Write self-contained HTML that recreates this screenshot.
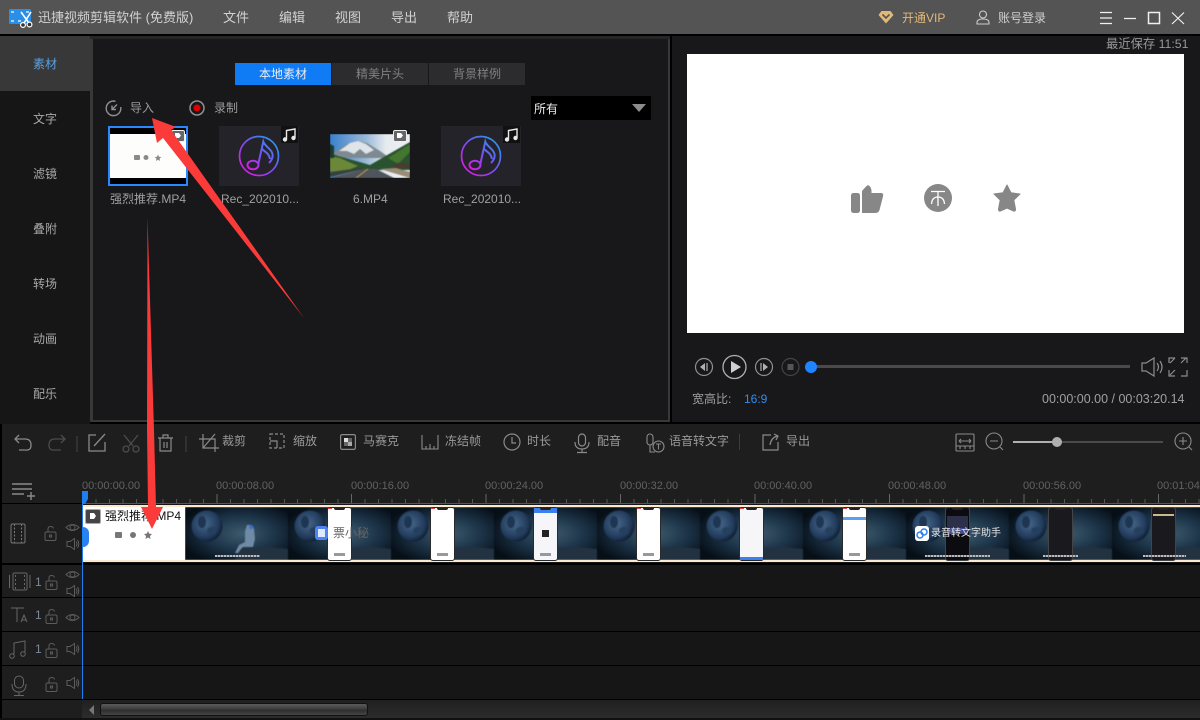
<!DOCTYPE html>
<html><head><meta charset="utf-8">
<style>
*{margin:0;padding:0;box-sizing:border-box}
html,body{width:1200px;height:720px;overflow:hidden;background:#000}
body{position:relative;font-family:"Liberation Sans","Noto Sans CJK SC",sans-serif;font-size:12px;color:#b4b4b4}
.a{position:absolute}
.t{position:absolute;white-space:nowrap;line-height:16px}
svg{position:absolute;overflow:visible}
.side{position:absolute;left:0;width:90px;text-align:center;line-height:16px;color:#a8a8a8}
.rt{position:absolute;top:479px;color:#626262;font-size:11px;line-height:14px;white-space:nowrap}
.ph{position:absolute;top:507px;width:25px;height:54px;border:1px solid #2a2a2a;border-radius:3px;background:#fff}
.ph i{position:absolute;left:6px;top:0;width:11px;height:2px;background:#222;border-radius:0 0 2px 2px}
.ph b{position:absolute;left:0;top:0;width:4px;height:1px;background:#e04040}
.ph u{position:absolute;left:6px;bottom:4px;width:11px;height:3px;background:#999}
.ph.k{background:#1a1a1e;border-color:#444}
.cap{position:absolute;top:555px;height:2px;background:repeating-linear-gradient(90deg,#bbb 0,#bbb 2px,#667 2px,#667 3px)}
</style></head><body>

<!-- title bar -->
<div class="a" style="left:0;top:0;width:1200px;height:34px;background:#545454"></div>
<svg style="left:9px;top:9px" width="24" height="20" viewBox="0 0 24 20">
<rect x="0" y="0" width="22" height="15" rx="1.500" fill="#2a8fe8"/>
<rect x="2" y="2" width="3" height="2" fill="#a9d6ff"/><rect x="17" y="2" width="3" height="2" fill="#a9d6ff"/>
<rect x="2" y="11" width="3" height="2" fill="#a9d6ff"/><rect x="9" y="11" width="3" height="2" fill="#a9d6ff"/>
<path d="M12 3L20 14M22 3L15 14" stroke="#fff" stroke-width="1.600" fill="none"/>
<circle cx="14" cy="16" r="2.400" fill="#333" stroke="#fff" stroke-width="1.200"/><circle cx="20.500" cy="15.500" r="2.400" fill="#333" stroke="#fff" stroke-width="1.200"/>
</svg>
<div class="t" style="left:38px;top:10px;font-size:13px;color:#d2d2d2">迅捷视频剪辑软件 (免费版)</div>
<div class="t" style="left:223px;top:10px;font-size:13px;color:#d2d2d2">文件</div>
<div class="t" style="left:279px;top:10px;font-size:13px;color:#d2d2d2">编辑</div>
<div class="t" style="left:335px;top:10px;font-size:13px;color:#d2d2d2">视图</div>
<div class="t" style="left:391px;top:10px;font-size:13px;color:#d2d2d2">导出</div>
<div class="t" style="left:447px;top:10px;font-size:13px;color:#d2d2d2">帮助</div>
<svg style="left:878px;top:10px" width="16" height="14" viewBox="0 0 16 14"><path d="M3.500 1H12.500L15.500 5L8 13.500L.5 5Z" fill="#e0b878"/><path d="M4.500 4.500L8 8L11.500 4.500" stroke="#545454" stroke-width="1.600" fill="none"/></svg>
<div class="t" style="left:902px;top:10px;color:#e0b878">开通VIP</div>
<svg style="left:976px;top:10px" width="14" height="15" viewBox="0 0 14 15"><circle cx="7" cy="4.500" r="3.500" fill="none" stroke="#ccc" stroke-width="1.100"/><path d="M1 14V12.500C1 10 3 9 7 9S13 10 13 12.500V14Z" fill="none" stroke="#ccc" stroke-width="1.100"/></svg>
<div class="t" style="left:998px;top:10px;color:#cfcfcf">账号登录</div>
<svg style="left:1099px;top:11px" width="90" height="14" viewBox="0 0 90 14" fill="none" stroke="#f0f0f0" stroke-width="1.200">
<path d="M1 1.500H13M1 7H13M1 12.500H13M25 7.500H37"/><rect x="49.500" y="1.500" width="11" height="11" stroke-width="1.500"/><path d="M73 1.500L85 13M85 1.500L73 13"/></svg>

<!-- left sidebar -->
<div class="a" style="left:0;top:36px;width:90px;height:388px;background:#161616"></div>
<div class="a" style="left:0;top:36px;width:90px;height:55px;background:#383838"></div>
<div class="side" style="top:56px;color:#5aa0e0">素材</div>
<div class="side" style="top:111px">文字</div>
<div class="side" style="top:166px">滤镜</div>
<div class="side" style="top:221px">叠附</div>
<div class="side" style="top:276px">转场</div>
<div class="side" style="top:331px">动画</div>
<div class="side" style="top:386px">配乐</div>

<!-- media panel -->
<div class="a" style="left:90px;top:36px;width:580px;height:386px;background:#383838"></div>
<div class="a" style="left:90px;top:36px;width:580px;height:3px;background:#262626"></div>
<div class="a" style="left:93px;top:39px;width:575px;height:381px;background:#18181a"></div>
<div class="a" style="left:235px;top:63px;width:96px;height:22px;background:#0f7bf5;color:#eee;text-align:center;line-height:22px">本地素材</div>
<div class="a" style="left:332px;top:63px;width:96px;height:22px;background:#2c2c2e;color:#808080;text-align:center;line-height:22px">精美片头</div>
<div class="a" style="left:429px;top:63px;width:96px;height:22px;background:#2c2c2e;color:#808080;text-align:center;line-height:22px">背景样例</div>
<svg style="left:105px;top:100px" width="17" height="17" viewBox="0 0 17 17" fill="none" stroke="#909090" stroke-width="1.400"><path d="M10.500 1.300A7.300 7.300 0 1 0 15.700 7"/><path d="M12 4.500L7.500 9M7 5.500V9.500H11"/></svg>
<div class="t" style="left:130px;top:100px;color:#9a9a9a">导入</div>
<svg style="left:189px;top:100px" width="16" height="16" viewBox="0 0 16 16"><circle cx="8" cy="8" r="7" fill="none" stroke="#909090" stroke-width="1.500"/><circle cx="8" cy="8" r="3.500" fill="#e00000"/></svg>
<div class="t" style="left:214px;top:100px;color:#9a9a9a">录制</div>
<div class="a" style="left:531px;top:96px;width:120px;height:24px;background:#000;color:#eee;line-height:27px;padding-left:3px">所有</div>
<svg style="left:632px;top:104px" width="14" height="8" viewBox="0 0 14 8"><path d="M0 0H14L7 8Z" fill="#8c8c8c"/></svg>

<!-- thumb 1 -->
<div class="a" style="left:108px;top:126px;width:80px;height:60px;background:#000;border:2px solid #2888ff"></div>
<div class="a" style="left:110px;top:134px;width:76px;height:44px;background:#fdfdfb"></div>
<svg style="left:134px;top:154px" width="30" height="8" viewBox="0 0 30 8" fill="#8a8a8a"><rect x="0" y="1" width="6" height="5" rx="1"/><circle cx="12" cy="3.500" r="2.500"/><path d="M24 0.500L25 2.700L27.300 3L25.600 4.600L26 7L24 5.800L22 7L22.400 4.600L20.700 3L23 2.700Z"/></svg>
<div class="a" style="left:171px;top:130px;width:14px;height:12px;background:#666;border:1px solid #eee;border-radius:2px"></div>
<svg style="left:174px;top:132px" width="8" height="8"><path d="M1 1H5L7 3.500L5 6H1Z" fill="#fff"/></svg>
<div class="t" style="left:110px;top:191px;color:#a0a0a0">强烈推荐.MP4</div>

<!-- thumb 2 -->
<div class="a" style="left:219px;top:126px;width:80px;height:60px;background:#232329"></div>
<svg style="left:219px;top:126px" width="80" height="60" viewBox="0 0 80 60">
<defs><linearGradient id="g" x1="1" y1="0" x2="0" y2="1"><stop offset="0" stop-color="#10a8f0"/><stop offset=".5" stop-color="#7a50f0"/><stop offset="1" stop-color="#f010e0"/></linearGradient>
<linearGradient id="gn" gradientUnits="userSpaceOnUse" x1="54" y1="14" x2="28" y2="46"><stop offset="0" stop-color="#2a90f0"/><stop offset=".5" stop-color="#7a50f0"/><stop offset="1" stop-color="#f010e0"/></linearGradient></defs>
<circle cx="40" cy="30" r="19.500" fill="none" stroke="url(#g)" stroke-width="1.700"/>
<path d="M39.300 38L44.300 15.700C46 21 55 24 53.500 31Q53 34 50 37M43 23C46 26 50 27 51 33" fill="none" stroke="url(#gn)" stroke-width="2"/>
<ellipse cx="34" cy="39" rx="5.500" ry="4.300" fill="none" stroke="url(#gn)" stroke-width="2"/>
</svg>
<div class="a" style="left:281px;top:126px;width:17px;height:17px;background:#111"></div>
<svg style="left:282px;top:128px" width="15" height="15" viewBox="0 0 15 15"><path d="M4.500 11V2.500L13 1V9.500" fill="none" stroke="#e8e8e8" stroke-width="1.400"/><circle cx="3" cy="11.500" r="2.200" fill="#e8e8e8"/><circle cx="11.500" cy="10" r="2.200" fill="#e8e8e8"/></svg>
<div class="t" style="left:221px;top:191px;color:#a0a0a0">Rec_202010...</div>

<!-- thumb 3 -->
<div class="a" style="left:330px;top:134px;width:80px;height:44px;overflow:hidden">
<svg style="left:0;top:0;filter:blur(.6px)" width="80" height="44" viewBox="0 0 80 44">
<defs><linearGradient id="sky" x1="0" y1="0" x2="1" y2="0"><stop offset="0" stop-color="#3a80cc"/><stop offset=".45" stop-color="#9ab8d8"/><stop offset=".7" stop-color="#e6ebef"/><stop offset="1" stop-color="#eef1f2"/></linearGradient></defs>
<rect width="80" height="44" fill="url(#sky)"/>
<path d="M3 19L15 11L27 7L37 9L50 17L60 24H3Z" fill="#7e8a92"/>
<path d="M9 17L20 9L28 7L36 10L44 16L36 20L30 15L24 20L17 17Z" fill="#dfe4e8"/>
<path d="M0 19L8 22L26 27L40 31L52 24L80 8V36H0Z" fill="#2b5230"/>
<path d="M0 22L10 24L28 32L16 37H0Z" fill="#6a8838"/>
<path d="M0 10L4 12V24H0Z" fill="#1e3a2c"/>
<path d="M58 24L80 10V18L68 30Z" fill="#43762f"/>
<path d="M0 44L34 35H46L64 44Z" fill="#50545c"/>
<path d="M0 38L30 34L34 35L0 43Z" fill="#39423a"/>
<path d="M26 44L38 35" stroke="#c8a440" stroke-width="1"/>
<path d="M50 35L80 44V38L66 34Z" fill="#9a8c78"/>
<rect x="64" y="29" width="16" height="5" fill="#4a3c30"/>
</svg></div>
<div class="a" style="left:393px;top:130px;width:14px;height:12px;background:#666;border:1px solid #eee;border-radius:2px"></div>
<svg style="left:396px;top:132px" width="8" height="8"><path d="M1 1H5L7 3.500L5 6H1Z" fill="#fff"/></svg>
<div class="t" style="left:353px;top:191px;color:#a0a0a0">6.MP4</div>

<!-- thumb 4 -->
<div class="a" style="left:441px;top:126px;width:80px;height:60px;background:#232329"></div>
<svg style="left:441px;top:126px" width="80" height="60" viewBox="0 0 80 60">
<circle cx="40" cy="30" r="19.500" fill="none" stroke="url(#g)" stroke-width="1.700"/>
<path d="M39.300 38L44.300 15.700C46 21 55 24 53.500 31Q53 34 50 37M43 23C46 26 50 27 51 33" fill="none" stroke="url(#gn)" stroke-width="2"/>
<ellipse cx="34" cy="39" rx="5.500" ry="4.300" fill="none" stroke="url(#gn)" stroke-width="2"/>
</svg>
<div class="a" style="left:503px;top:126px;width:17px;height:17px;background:#111"></div>
<svg style="left:504px;top:128px" width="15" height="15" viewBox="0 0 15 15"><path d="M4.500 11V2.500L13 1V9.500" fill="none" stroke="#e8e8e8" stroke-width="1.400"/><circle cx="3" cy="11.500" r="2.200" fill="#e8e8e8"/><circle cx="11.500" cy="10" r="2.200" fill="#e8e8e8"/></svg>
<div class="t" style="left:443px;top:191px;color:#a0a0a0">Rec_202010...</div>

<!-- preview -->
<div class="a" style="left:672px;top:36px;width:528px;height:386px;background:#18181a"></div>
<div class="t" style="left:1106px;top:36px;color:#989898;font-size:12.300px">最近保存 11:51</div>
<div class="a" style="left:687px;top:54px;width:497px;height:279px;background:#fff"></div>
<svg style="left:850px;top:183px" width="170" height="32" viewBox="0 0 170 32" fill="#878787">
<rect x="1" y="10" width="9" height="20" rx="2.500"/>
<path d="M12 30V8L16 3.500Q18 1 20 3.500Q21.800 6 21.500 10H31Q34 10 33 13.500L29.500 27Q28.500 30 25 30Z"/>
<circle cx="88" cy="15" r="14"/>
<path d="M81 8.500H95M88 8.500V23M88 14Q82 14 81.500 21M88 14Q94 14 94.500 21" stroke="#fff" stroke-width="1.300" fill="none"/>
<path d="M157 2L161 9.800L170 11L163.800 17L165.500 26C165.700 28 164.500 28.500 163 27.800L157 25L151 27.800C149.500 28.500 148.300 28 148.500 26L150.200 17L144 11L153 9.800Z" stroke="#878787" stroke-linejoin="round"/>
</svg>

<!-- player controls -->
<svg style="left:690px;top:352px" width="120" height="30" viewBox="0 0 120 30" fill="none">
<circle cx="14" cy="15" r="8.500" stroke="#909090" stroke-width="1.200"/><path d="M15 11V19L10 15Z" fill="#b0b0b0"/><path d="M17 11V19" stroke="#b0b0b0" stroke-width="1.200"/>
<circle cx="44.500" cy="15" r="11.500" stroke="#b0b0b0" stroke-width="1.300"/><path d="M41 9V21L51 15Z" fill="#d0d0d0"/>
<circle cx="74" cy="15" r="8.500" stroke="#909090" stroke-width="1.200"/><path d="M73 11V19L78 15Z" fill="#b0b0b0"/><path d="M71 11V19" stroke="#b0b0b0" stroke-width="1.200"/>
<circle cx="100.500" cy="15" r="8.500" stroke="#444" stroke-width="1.200"/><rect x="97.500" y="12" width="6" height="6" fill="#555"/>
</svg>
<div class="a" style="left:811px;top:365px;width:319px;height:3px;background:#4a4a4a"></div>
<div class="a" style="left:805px;top:361px;width:12px;height:12px;border-radius:50%;background:#1f84ff"></div>
<svg style="left:1140px;top:356px" width="50" height="22" viewBox="0 0 50 22" fill="none" stroke="#8c8c8c" stroke-width="1.200">
<path d="M2 7H6L14 2V20L6 15H2Z"/><path d="M17 7Q20 11 17 15M20 5Q24 11 20 17"/>
<path d="M29 7V2H35M41 2H47V7M29 14V20H35M41 20H47V14M30 7L35 2M46 2L41 7M30 19L35 14"/>
</svg>
<div class="t" style="left:692px;top:391px;color:#a0a0a0">宽高比:</div>
<div class="t" style="left:744px;top:391px;color:#2f8df0">16:9</div>
<div class="t" style="left:1042px;top:391px;color:#a0a0a0;font-size:12.500px">00:00:00.00 / 00:03:20.14</div>

<!-- timeline -->
<div class="a" style="left:2px;top:424px;width:1198px;height:296px;background:#1e1e1e"></div>
<svg style="left:13px;top:432px" width="260" height="22" viewBox="0 0 260 22" fill="none">
<path d="M2 7H12Q18 7 18 13T12 18H6M6 3L2 7L6 11" stroke="#8a8a8a" stroke-width="1.300"/>
<path d="M52 7H42Q36 7 36 13T42 18H48M48 3L52 7L48 11" stroke="#4c4c4c" stroke-width="1.300"/>
<path d="M64 4V20" stroke="#444"/>
<path d="M83 3H76V19H92V10M92 2L81 14" stroke="#8a8a8a" stroke-width="1.300"/>
<path d="M111 3L120 14M125 3L116 14" stroke="#4c4c4c" stroke-width="1.300"/><circle cx="113" cy="17" r="3" stroke="#4c4c4c" stroke-width="1.300"/><circle cx="123" cy="17" r="3" stroke="#4c4c4c" stroke-width="1.300"/>
<path d="M145 6H160M150 6V3H155V6M147 6V19H158V6M151 10V16M154 10V16" stroke="#8a8a8a" stroke-width="1.200"/>
<path d="M173 4V20" stroke="#444"/>
<path d="M186 7H202V20M190 2V16H206M202 2L190 16" stroke="#8a8a8a" stroke-width="1.200"/>
</svg>
<div class="t" style="left:222px;top:433px;color:#9a9a9a">裁剪</div>
<svg style="left:269px;top:433px" width="16" height="16" viewBox="0 0 16 16" fill="none" stroke="#8a8a8a" stroke-width="1.200"><rect x="1" y="1" width="14" height="14" stroke-dasharray="3 2"/><path d="M1 8H8V15" /></svg>
<div class="t" style="left:293px;top:433px;color:#9a9a9a">缩放</div>
<svg style="left:340px;top:434px" width="16" height="16" viewBox="0 0 16 16"><rect x=".6" y=".6" width="14.800" height="14.800" rx="1.500" fill="none" stroke="#8a8a8a" stroke-width="1.200"/><rect x="4" y="4" width="4" height="4" fill="#ddd"/><rect x="8" y="4" width="4" height="4" fill="#666"/><rect x="4" y="8" width="4" height="4" fill="#666"/><rect x="8" y="8" width="4" height="4" fill="#aaa"/></svg>
<div class="t" style="left:363px;top:433px;color:#9a9a9a">马赛克</div>
<svg style="left:421px;top:434px" width="18" height="16" viewBox="0 0 18 16" fill="none" stroke="#8a8a8a" stroke-width="1.100"><path d="M1 1V15H17V1M5 15V12M9 15V10M13 15V12"/></svg>
<div class="t" style="left:445px;top:433px;color:#9a9a9a">冻结帧</div>
<svg style="left:503px;top:433px" width="18" height="18" viewBox="0 0 18 18" fill="none" stroke="#8a8a8a" stroke-width="1.200"><circle cx="9" cy="9" r="8"/><path d="M9 4V10H13"/></svg>
<div class="t" style="left:527px;top:433px;color:#9a9a9a">时长</div>
<svg style="left:574px;top:433px" width="16" height="20" viewBox="0 0 16 20" fill="none" stroke="#8a8a8a" stroke-width="1.200"><rect x="4.500" y="1" width="7" height="12" rx="3.500"/><path d="M1 9Q1 16 8 16T15 9M8 16V19M3 19.500H13"/></svg>
<div class="t" style="left:597px;top:433px;color:#9a9a9a">配音</div>
<svg style="left:645px;top:433px" width="20" height="20" viewBox="0 0 20 20" fill="none" stroke="#8a8a8a" stroke-width="1.100"><rect x="2" y="1" width="6" height="11" rx="3"/><path d="M5 12V19H10"/><circle cx="13.500" cy="13.500" r="5.500"/><path d="M11 11H16M13.500 11V16.500"/></svg>
<div class="t" style="left:669px;top:433px;color:#9a9a9a">语音转文字</div>
<div class="a" style="left:739px;top:434px;width:1px;height:16px;background:#3c3c3c"></div>
<svg style="left:762px;top:433px" width="18" height="18" viewBox="0 0 18 18" fill="none" stroke="#8a8a8a" stroke-width="1.200"><path d="M9 2H1V17H16V9M8 12Q9 5 15 3M12 1L16 3L14 7"/></svg>
<div class="t" style="left:786px;top:433px;color:#9a9a9a">导出</div>
<svg style="left:955px;top:432px" width="240" height="22" viewBox="0 0 240 22" fill="none" stroke="#8a8a8a" stroke-width="1.100">
<rect x="1" y="2" width="18" height="17" rx="1"/><path d="M4 9H16M4 9L6 7M4 9L6 11M16 9L14 7M16 9L14 11M1 14H19M5 14V17M10 14V17M15 14V17"/>
<circle cx="39" cy="9" r="8"/><path d="M35 9H43M45 15L48 18"/>
<circle cx="228" cy="9" r="8"/><path d="M224 9H232M228 5V13M234 15L237 18"/>
</svg>
<div class="a" style="left:1013px;top:441px;width:150px;height:2px;background:#4a4a4a"></div>
<div class="a" style="left:1013px;top:441px;width:44px;height:2px;background:#b0b0b0"></div>
<div class="a" style="left:1052px;top:437px;width:10px;height:10px;border-radius:50%;background:#b0b0b0"></div>

<!-- ruler -->
<svg style="left:12px;top:482px" width="24" height="18" viewBox="0 0 24 18" fill="none" stroke="#8a8a8a" stroke-width="1.400"><path d="M0 2H20M0 7H20M0 12H12M15 14H23M19 10V18"/></svg>
<div class="rt" style="left:82px">00:00:00.00</div>
<div class="rt" style="left:216px">00:00:08.00</div>
<div class="rt" style="left:351px">00:00:16.00</div>
<div class="rt" style="left:485px">00:00:24.00</div>
<div class="rt" style="left:620px">00:00:32.00</div>
<div class="rt" style="left:754px">00:00:40.00</div>
<div class="rt" style="left:888px">00:00:48.00</div>
<div class="rt" style="left:1023px">00:00:56.00</div>
<div class="rt" style="left:1157px">00:01:04</div>
<div class="a" style="left:82px;top:503px;width:1118px;height:1px;background:#555"></div>
<div class="a" style="left:82px;top:499px;width:1118px;height:4px;background:repeating-linear-gradient(90deg,#555 0,#555 1px,transparent 1px,transparent 13.450px)"></div>
<div class="a" style="left:82px;top:494px;width:1118px;height:9px;background:repeating-linear-gradient(90deg,#666 0,#666 1px,transparent 1px,transparent 134.500px)"></div>

<!-- track rows -->
<div class="a" style="left:0;top:503px;width:82px;height:1px;background:#000"></div>
<div class="a" style="left:2px;top:564px;width:80px;height:135px;background:#1e1e1e"></div>
<div class="a" style="left:82px;top:504px;width:1118px;height:195px;background:#161616"></div>
<div class="a" style="left:2px;top:563px;width:1198px;height:2px;background:#000"></div>
<div class="a" style="left:2px;top:597px;width:1198px;height:1px;background:#000"></div>
<div class="a" style="left:2px;top:631px;width:1198px;height:1px;background:#000"></div>
<div class="a" style="left:2px;top:665px;width:1198px;height:1px;background:#000"></div>
<div class="a" style="left:2px;top:699px;width:1198px;height:1px;background:#000"></div>

<!-- track header icons -->
<svg style="left:0;top:504px" width="82" height="196" viewBox="0 0 82 196" fill="none" stroke="#5c5c5c" stroke-width="1">
<defs>
<g id="lk"><rect x="0" y="6" width="11" height="8.500" rx="1.500"/><path d="M3 6V3Q3 .5 5.500 .5T8.500 2.500"/><rect x="4.500" y="9" width="2" height="2"/></g>
<g id="ey"><path d="M0 4.500Q6.500 -1.500 13 4.500Q6.500 10.500 0 4.500Z"/><circle cx="6.500" cy="4.500" r="2.500"/></g>
<g id="sp"><path d="M1 3.500H4L8.500 .5V11.500L4 8.500H1Z"/><path d="M10 3.500Q12 6 10 8.500M11.500 2Q14 6 11.500 10"/></g>
</defs>
<rect x="11" y="20" width="14" height="19" rx="1.500" stroke="#777"/><path d="M14.500 20V39M21.500 20V39" stroke="#777" stroke-dasharray="2 1.500"/>
<use href="#lk" x="45" y="22"/>
<use href="#ey" x="66" y="19"/>
<use href="#sp" x="66" y="34"/>
<rect x="13" y="69" width="14" height="17" rx="1.500" stroke="#666"/><path d="M9.500 71V84M30 71V84" stroke="#666"/><path d="M15.500 71V85M24.500 71V85" stroke="#666" stroke-dasharray="2 2"/>
<use href="#lk" x="46" y="71"/>
<use href="#ey" x="66" y="66"/>
<use href="#sp" x="66" y="81"/>
<path d="M11 104H24M17 104V118" stroke="#666"/><path d="M21 118L24 111L27 118M22 116H26" stroke="#666"/>
<use href="#lk" x="46" y="105"/>
<use href="#ey" x="66" y="109"/>
<path d="M14 150V139L25 137V148" stroke="#666"/><circle cx="12" cy="152" r="2.300" stroke="#666"/><circle cx="23" cy="150" r="2.300" stroke="#666"/>
<use href="#lk" x="46" y="139"/>
<use href="#sp" x="66" y="139"/>
<rect x="14.500" y="172" width="9" height="12" rx="4.500" stroke="#666"/><path d="M12 180Q12 188 19 188T26 180M19 188V191M14 191.500H24" stroke="#666"/>
<use href="#lk" x="46" y="173"/>
<use href="#sp" x="66" y="173"/>
</svg>
<div class="t" style="left:35px;top:574px;color:#7d8a9c">1</div>
<div class="t" style="left:35px;top:607px;color:#7d8a9c">1</div>
<div class="t" style="left:35px;top:641px;color:#7d8a9c">1</div>

<!-- video strip -->
<div class="a" style="left:83px;top:505px;width:1117px;height:57px;background:#fff;border-top:2px solid #fbe8cf;border-bottom:2px solid #fbe8cf"></div>
<div class="a" style="left:185px;top:507px;width:1015px;height:53px;overflow:hidden">
<svg style="left:0;top:0;filter:blur(.5px)" width="1015" height="53" viewBox="0 0 1015 53">
<defs>
<radialGradient id="bg" cx=".55" cy=".5" r=".62"><stop offset="0" stop-color="#3d5a6e"/><stop offset=".55" stop-color="#1b3246"/><stop offset="1" stop-color="#060e16"/></radialGradient>
<radialGradient id="mn" cx=".42" cy=".42" r=".62"><stop offset="0" stop-color="#47688a"/><stop offset=".75" stop-color="#20395a"/><stop offset="1" stop-color="#0e1c2e"/></radialGradient>
<g id="fr"><rect width="103.500" height="53" fill="url(#bg)"/><circle cx="22" cy="19" r="15.500" fill="url(#mn)"/><ellipse cx="17" cy="15" rx="4" ry="6" fill="#1e3654"/><ellipse cx="27" cy="24" rx="5" ry="4" fill="#25405f"/><path d="M54 41L84 40L103.500 42V53H50Z" fill="#223240"/></g>
</defs>
<use href="#fr" x="0"/><use href="#fr" x="103"/><use href="#fr" x="206"/><use href="#fr" x="309"/><use href="#fr" x="412"/><use href="#fr" x="515"/><use href="#fr" x="618"/><use href="#fr" x="721"/><use href="#fr" x="824"/><use href="#fr" x="927"/>
<path d="M62 18Q68 17 69 22L70 32L68 40H58L56 42L53 46H50L54 38L60 35L60 24Z" fill="#6f8aa4"/>
<circle cx="66" cy="20" r="2" fill="#3a6fd8"/>
</svg></div>
<div class="cap" style="left:215px;width:45px"></div>
<div class="ph" style="left:327px"><b></b><i></i><u></u></div>
<div class="ph" style="left:430px"><b></b><i></i><u></u></div>
<div class="ph" style="left:533px;background:#f6f6fa"><div class="a" style="left:0;top:0;width:23px;height:5px;background:#3a7ff0"></div><div class="a" style="left:8px;top:22px;width:7px;height:7px;background:#222"></div><i></i><u></u></div>
<div class="ph" style="left:636px"><b></b><i></i><u></u></div>
<div class="ph" style="left:739px;background:#f6f6f8"><b></b><i></i><div class="a" style="left:0;bottom:0;width:23px;height:3px;background:#3a7ff0"></div></div>
<div class="ph" style="left:842px"><b></b><div class="a" style="left:0;top:9px;width:23px;height:3px;background:#5a9ff0"></div><i></i><u></u></div>
<div class="ph k" style="left:945px;background:#0c0c10"><div class="a" style="left:1px;top:8px;width:21px;height:12px;background:#2c3048"></div><div class="a" style="left:1px;top:20px;width:21px;height:6px;background:#3f4a90"></div><i></i></div>
<div class="ph k" style="left:1048px"><i></i></div>
<div class="ph k" style="left:1151px"><div class="a" style="left:1px;top:6px;width:21px;height:2px;background:#c9b88a"></div><i></i></div>
<div class="cap" style="left:925px;width:65px"></div>
<div class="cap" style="left:1043px;width:35px"></div>
<div class="cap" style="left:1143px;width:43px"></div>
<div class="a" style="left:315px;top:526px;width:13px;height:14px;background:#4b86f0;border-radius:3px"></div>
<div class="a" style="left:318px;top:529px;width:7px;height:8px;background:#dfe9ff"></div>
<div class="t" style="left:333px;top:525px;color:#666">票小秘</div>
<div class="a" style="left:915px;top:526px;width:14px;height:15px;background:#fff;border-radius:3px"></div>
<svg style="left:916px;top:528px" width="12" height="11" viewBox="0 0 12 11" fill="none" stroke="#2f7ff0" stroke-width="1.500"><circle cx="4" cy="7" r="3"/><circle cx="8" cy="4" r="3"/></svg>
<div class="t" style="left:931px;top:526px;color:#e4e4e4;font-size:10px">录音转文字助手</div>

<!-- first clip label -->
<div class="a" style="left:85px;top:509px;width:16px;height:15px;background:#444;border:1.500px solid #aaa;border-radius:2px"></div>
<svg style="left:90px;top:513px" width="7" height="7"><path d="M0 0H4L6 3L4 6H0Z" fill="#fff"/></svg>
<div class="t" style="left:105px;top:508px;color:#111">强烈推荐.MP4</div>
<svg style="left:115px;top:531px" width="38" height="8" viewBox="0 0 38 8" fill="#777"><rect x="0" y="1" width="7" height="6" rx="1"/><circle cx="18" cy="4" r="3"/><path d="M33 0L34.200 2.600L37 3L35 5L35.500 8L33 6.500L30.500 8L31 5L29 3L31.800 2.600Z"/></svg>
<div class="a" style="left:82px;top:527px;width:7px;height:20px;background:#2a82f0;border-radius:0 6px 6px 0"></div>

<!-- playhead -->
<div class="a" style="left:82px;top:494px;width:1px;height:205px;background:#1f7ff0"></div>
<svg style="left:82px;top:491px" width="7" height="13"><path d="M0 0H6V8L3 13H0Z" fill="#1f7ff0"/></svg>

<!-- scrollbar -->
<div class="a" style="left:82px;top:700px;width:1118px;height:18px;background:linear-gradient(#202020,#2c2c2c)"></div>
<svg style="left:88px;top:705px" width="8" height="10"><path d="M6 0V10L1 5Z" fill="#777"/></svg>
<div class="a" style="left:100px;top:703px;width:268px;height:13px;background:linear-gradient(#5a5a5a,#3e3e3e 45%,#2e2e2e 55%,#444);border:1px solid #111;border-radius:3px"></div>
<div class="a" style="left:0;top:718px;width:1200px;height:2px;background:#111"></div>

<!-- red arrows -->
<svg style="left:0;top:0" width="1200" height="720" viewBox="0 0 1200 720">
<path d="M152 118L176 127L171 130L304 318L163 138L157 143Z" fill="#fb3a3a"/>
<path d="M147.500 217L150 300L154 430L156 507H163L152 529L141 507H148L147 430Z" fill="#fb3a3a"/>
</svg>
</body></html>
